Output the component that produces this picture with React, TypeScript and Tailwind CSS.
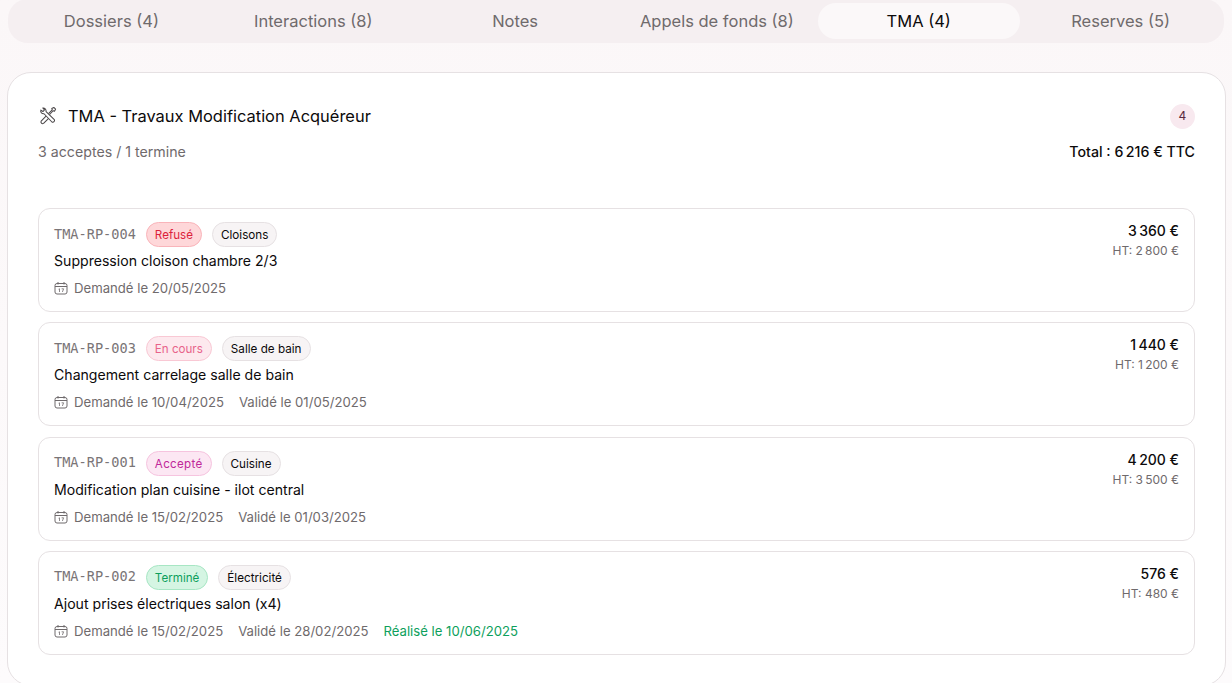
const tabs = [
  { label: "Dossiers (4)" },
  { label: "Interactions (8)" },
  { label: "Notes" },
  { label: "Appels de fonds (8)" },
  { label: "TMA (4)", active: true },
  { label: "Reserves (5)" },
];

const rows = [
  {
    ref: "TMA-RP-004",
    status: "Refusé",
    statusClass: "bg-[#fed7d9] border-[#f9b4ba] text-[#dc1f3c]",
    tag: "Cloisons",
    title: "Suppression cloison chambre 2/3",
    asked: "Demandé le 20/05/2025",
    ttc: "3\u202f360 €",
    ht: "HT: 2\u202f800 €",
  },
  {
    ref: "TMA-RP-003",
    status: "En cours",
    statusClass: "bg-[#fde9ee] border-[#f9c8d4] text-[#e8638a]",
    tag: "Salle de bain",
    title: "Changement carrelage salle de bain",
    asked: "Demandé le 10/04/2025",
    validated: "Validé le 01/05/2025",
    ttc: "1\u202f440 €",
    ht: "HT: 1\u202f200 €",
  },
  {
    ref: "TMA-RP-001",
    status: "Accepté",
    statusClass: "bg-[#fce7f3] border-[#f6c4df] text-[#c0289a] tracking-[0.3px]",
    tag: "Cuisine",
    title: "Modification plan cuisine - ilot central",
    asked: "Demandé le 15/02/2025",
    validated: "Validé le 01/03/2025",
    ttc: "4\u202f200 €",
    ht: "HT: 3\u202f500 €",
  },
  {
    ref: "TMA-RP-002",
    status: "Terminé",
    statusClass: "bg-[#d5f5e3] border-[#a7e6c4] text-[#0d9f5c]",
    tag: "Électricité",
    title: "Ajout prises électriques salon (x4)",
    asked: "Demandé le 15/02/2025",
    validated: "Validé le 28/02/2025",
    done: "Réalisé le 10/06/2025",
    ttc: "576 €",
    ht: "HT: 480 €",
  },
];

function CalendarIcon() {
  return (
    <svg width="14" height="14" viewBox="0 0 14 14" fill="none" stroke="#6f6a6c" strokeWidth="1" className="shrink-0">
      <rect x="1" y="2.5" width="12" height="10.5" rx="2" />
      <path d="M1 5.5h12M4 1v2.5M10 1v2.5" />
      <path d="M4.6 8.2l.9-.4v3.2M7.6 7.8h2l-1.2 3.2" strokeWidth="0.8" />
    </svg>
  );
}

// crossed wrench and screwdriver
function ToolsIcon() {
  return (
    <svg width="19" height="19" viewBox="0 0 24 24" fill="none" stroke="#4a4648" strokeWidth="1.3" strokeLinejoin="round" strokeLinecap="round" className="shrink-0">
      <path d="M6 2.5 8.2 5 6.2 7 3.6 5.2C2.8 7.6 4.6 10.2 7.6 9.8L17.6 20.2a2.2 2.2 0 0 0 3-3L10.2 7C10.6 4.2 8.4 2 6 2.5Z" />
      <path d="M13.6 9.2 18 4.8l-.6-1.6L20 1.8l2.2 2.2-1.4 2.6-1.6-.6-4.2 4.4" />
      <path d="M9.8 13.2 4 19a2.2 2.2 0 0 0 3 3l5.8-5.8" />
    </svg>
  );
}

export default function App() {
  return (
    <div className="h-[683px] overflow-hidden bg-linear-to-b from-[#fbf7f8] to-[#fdfbfc] font-['Inter',sans-serif] text-[#0c0a0b]">
      <div className="mx-2 -mt-px grid grid-cols-6 rounded-[20px] bg-[#f5eff1] p-[4px_2.5px]">
        {tabs.map((tab) => (
          <div
            key={tab.label}
            className={`flex h-9 items-center justify-center rounded-[18px] text-[16.5px] ${
              tab.active ? "bg-[#fbf8f9] text-[#0c0a0b]" : "text-[#6f6a6c]"
            }`}
          >
            {tab.label}
          </div>
        ))}
      </div>

      <div className="ml-[7px] mr-[6px] mt-[29px] rounded-[24px] border border-[#e6e1e3] bg-white px-[30px] pb-[30px] pt-[30px]">
        <div className="flex h-[26px] items-center justify-between">
          <div className="flex items-center gap-[11px]">
            <ToolsIcon />
            <h2 className="text-[16.45px] font-normal">TMA - Travaux Modification Acquéreur</h2>
          </div>
          <span className="flex h-[25px] w-[25px] items-center justify-center rounded-full bg-[#f8e9ef] text-[12px] text-[#5a2a40]">
            4
          </span>
        </div>
        <div className="mt-[12px] flex items-center justify-between text-[14.2px]">
          <span className="text-[#6f6a6c]">3 acceptes / 1 termine</span>
          <span className="font-medium">Total : 6{"\u202f"}216 € TTC</span>
        </div>

        <div className="mt-[46px] flex flex-col gap-[10.2px]">
          {rows.map((row) => (
            <div
              key={row.ref}
              className="flex h-[104px] justify-between rounded-[12px] border border-[#e6e1e3] px-[15px] pt-[13px]"
            >
              <div>
                <div className="flex items-center gap-[10px]">
                  <span className="pb-[2px] font-['DejaVu_Sans_Mono',monospace] text-[13.6px] text-[#7a7577]">{row.ref}</span>
                  <span className={`rounded-full border px-[8px] pb-[2px] pt-[4px] text-[11.6px] leading-[17px] ${row.statusClass}`}>
                    {row.status}
                  </span>
                  <span className="rounded-full border border-[#e6e1e3] bg-[#f7f4f5] px-[8px] pb-[2px] pt-[4px] text-[11.7px] leading-[17px]">
                    {row.tag}
                  </span>
                </div>
                <div className="mt-[2px] text-[14.1px] leading-[24px]">{row.title}</div>
                <div className="mt-[5px] flex items-center gap-[15px] text-[13.15px] leading-[20px] text-[#6f6a6c]">
                  <span className="flex items-center gap-[6px]">
                    <CalendarIcon />
                    {row.asked}
                  </span>
                  {row.validated && <span>{row.validated}</span>}
                  {row.done && <span className="text-[#0d9f5c]">{row.done}</span>}
                </div>
              </div>
              <div className="-mt-px text-right">
                <div className="text-[14px] font-medium leading-[20px]">{row.ttc}</div>
                <div className="text-[12px] leading-[20px] text-[#6f6a6c]">{row.ht}</div>
              </div>
            </div>
          ))}
        </div>
      </div>
    </div>
  );
}
